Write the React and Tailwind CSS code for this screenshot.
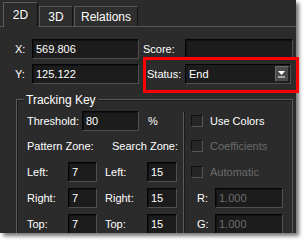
import React from "react";

const font = { fontFamily: '"Liberation Sans", Arial, sans-serif' };

const Field = ({ w, value, dim }) => (
  <div
    className={`${w} h-[20px] flex items-center pl-[3px] bg-[#1c1c1c] border border-t-[#050505] border-l-[#050505] border-r-[#4f4f4f] border-b-[#4f4f4f] shadow-[inset_1px_1px_0_#111] ${
      dim ? "text-[#6e6e6e]" : "text-white"
    }`}
  >
    {value}
  </div>
);

const Check = ({ label, dim }) => (
  <div className="h-[20px] flex items-center gap-[7px]">
    <div className="w-[12px] h-[12px] bg-[#262626] border border-t-[#111] border-l-[#111] border-r-[#555] border-b-[#555]" />
    <span className={dim ? "text-[#6a6a6a]" : "text-white"}>{label}</span>
  </div>
);

const App = () => {
  return (
    <div
      className="relative w-[306px] h-[241px] bg-white overflow-hidden text-[11px] leading-none"
      style={font}
    >
      <div className="w-[296px] h-[233px] bg-[#2b2b2b] overflow-hidden shadow-[3px_3px_4px_rgba(0,0,0,0.55)] text-white">
        {/* tabs */}
        <div className="h-[27px] flex items-end pl-[3px] gap-[1px] border-b border-[#575757]">
          <div className="w-[35px] h-[25px] -mb-px flex items-center justify-center bg-[#2b2b2b] border-t border-l border-[#5c5c5c] border-r border-r-[#111] text-[12px]">
            2D
          </div>
          <div className="w-[34px] h-[20px] flex items-center justify-center bg-[#2e2e2e] border-t border-l border-[#555] border-r border-r-[#111] text-[12px]">
            3D
          </div>
          <div className="w-[64px] h-[20px] flex items-center justify-center bg-[#2e2e2e] border-t border-l border-[#555] border-r border-r-[#111] text-[12px]">
            Relations
          </div>
        </div>

        {/* X / Score */}
        <div className="flex items-center mt-[12px] pl-[15px]">
          <span className="w-[17px]">X:</span>
          <Field w="w-[107px]" value="569.806" />
          <span className="w-[42px] ml-[4px]">Score:</span>
          <Field w="w-[108px]" value="" />
        </div>

        {/* Y / Status */}
        <div className="flex items-center mt-[5px] pl-[15px]">
          <span className="w-[17px]">Y:</span>
          <Field w="w-[107px]" value="125.122" />
          <span className="w-[38px] ml-[8px]">Status:</span>
          <div className="w-[106px] h-[20px] flex items-center justify-between pl-[3px] pr-[1px] bg-[#1c1c1c] border border-t-[#050505] border-l-[#050505] border-r-[#4f4f4f] border-b-[#4f4f4f]">
            <span>End</span>
            <div className="w-[14px] h-[16px] flex items-center justify-center bg-[#4a4a4a] border border-t-[#6a6a6a] border-l-[#6a6a6a] border-r-[#222] border-b-[#222]">
              <svg width="8" height="7" viewBox="0 0 8 7">
                <path d="M0 0h7L3.5 4z" fill="#fff" />
                <path d="M0 6h7" stroke="#fff" strokeWidth="1" />
              </svg>
            </div>
          </div>
        </div>

        {/* Tracking Key group */}
        <div className="relative ml-[16px] mt-[15px] w-[277px] h-[140px] border border-[#5a5a5a] shadow-[inset_1px_1px_0_#1a1a1a] flex">
          <span className="absolute -top-[6px] left-[7px] px-[2px] bg-[#2b2b2b] text-[12px]">
            Tracking Key
          </span>

          {/* left column */}
          <div className="w-[166px] pl-[10px] pt-[11px] flex flex-col">
            <div className="h-[20px] flex items-center">
              <span className="w-[55px]">Threshold:</span>
              <Field w="w-[57px]" value="80" />
              <span className="ml-[9px]">%</span>
            </div>
            <div className="h-[20px] mt-[5px] flex items-center">
              <span className="w-[85px]">Pattern Zone:</span>
              <span>Search Zone:</span>
            </div>
            {["Left:", "Right:", "Top:"].map((l, i) => (
              <div
                key={l}
                className={`h-[20px] flex items-center ${i === 0 ? "mt-[6px]" : "mt-[6px]"}`}
              >
                <span className="w-[41px]">{l}</span>
                <Field w="w-[29px]" value="7" />
                <span className="w-[42px] ml-[8px]">{l}</span>
                <Field w="w-[30px]" value="15" />
              </div>
            ))}
          </div>

          {/* right column */}
          <div className="mt-[12px] flex-1 border-l border-[#5a5a5a] shadow-[inset_1px_0_0_#1a1a1a] pl-[7px] flex flex-col">
            <div className="-mt-[1px]">
              <Check label="Use Colors" />
            </div>
            <div className="mt-[5px]">
              <Check label="Coefficients" dim />
            </div>
            <div className="mt-[6px]">
              <Check label="Automatic" dim />
            </div>
            <div className="h-[20px] mt-[6px] flex items-center pl-[6px]">
              <span className="w-[18px]">R:</span>
              <Field w="w-[68px]" value="1.000" dim />
            </div>
            <div className="h-[20px] mt-[6px] flex items-center pl-[6px]">
              <span className="w-[18px]">G:</span>
              <Field w="w-[68px]" value="1.000" dim />
            </div>
          </div>
        </div>
      </div>

      {/* red highlight annotation */}
      <div className="absolute left-[143px] top-[57px] w-[156px] h-[36px] border-[3px] border-[#ff0000]" />
    </div>
  );
};

export default App;
